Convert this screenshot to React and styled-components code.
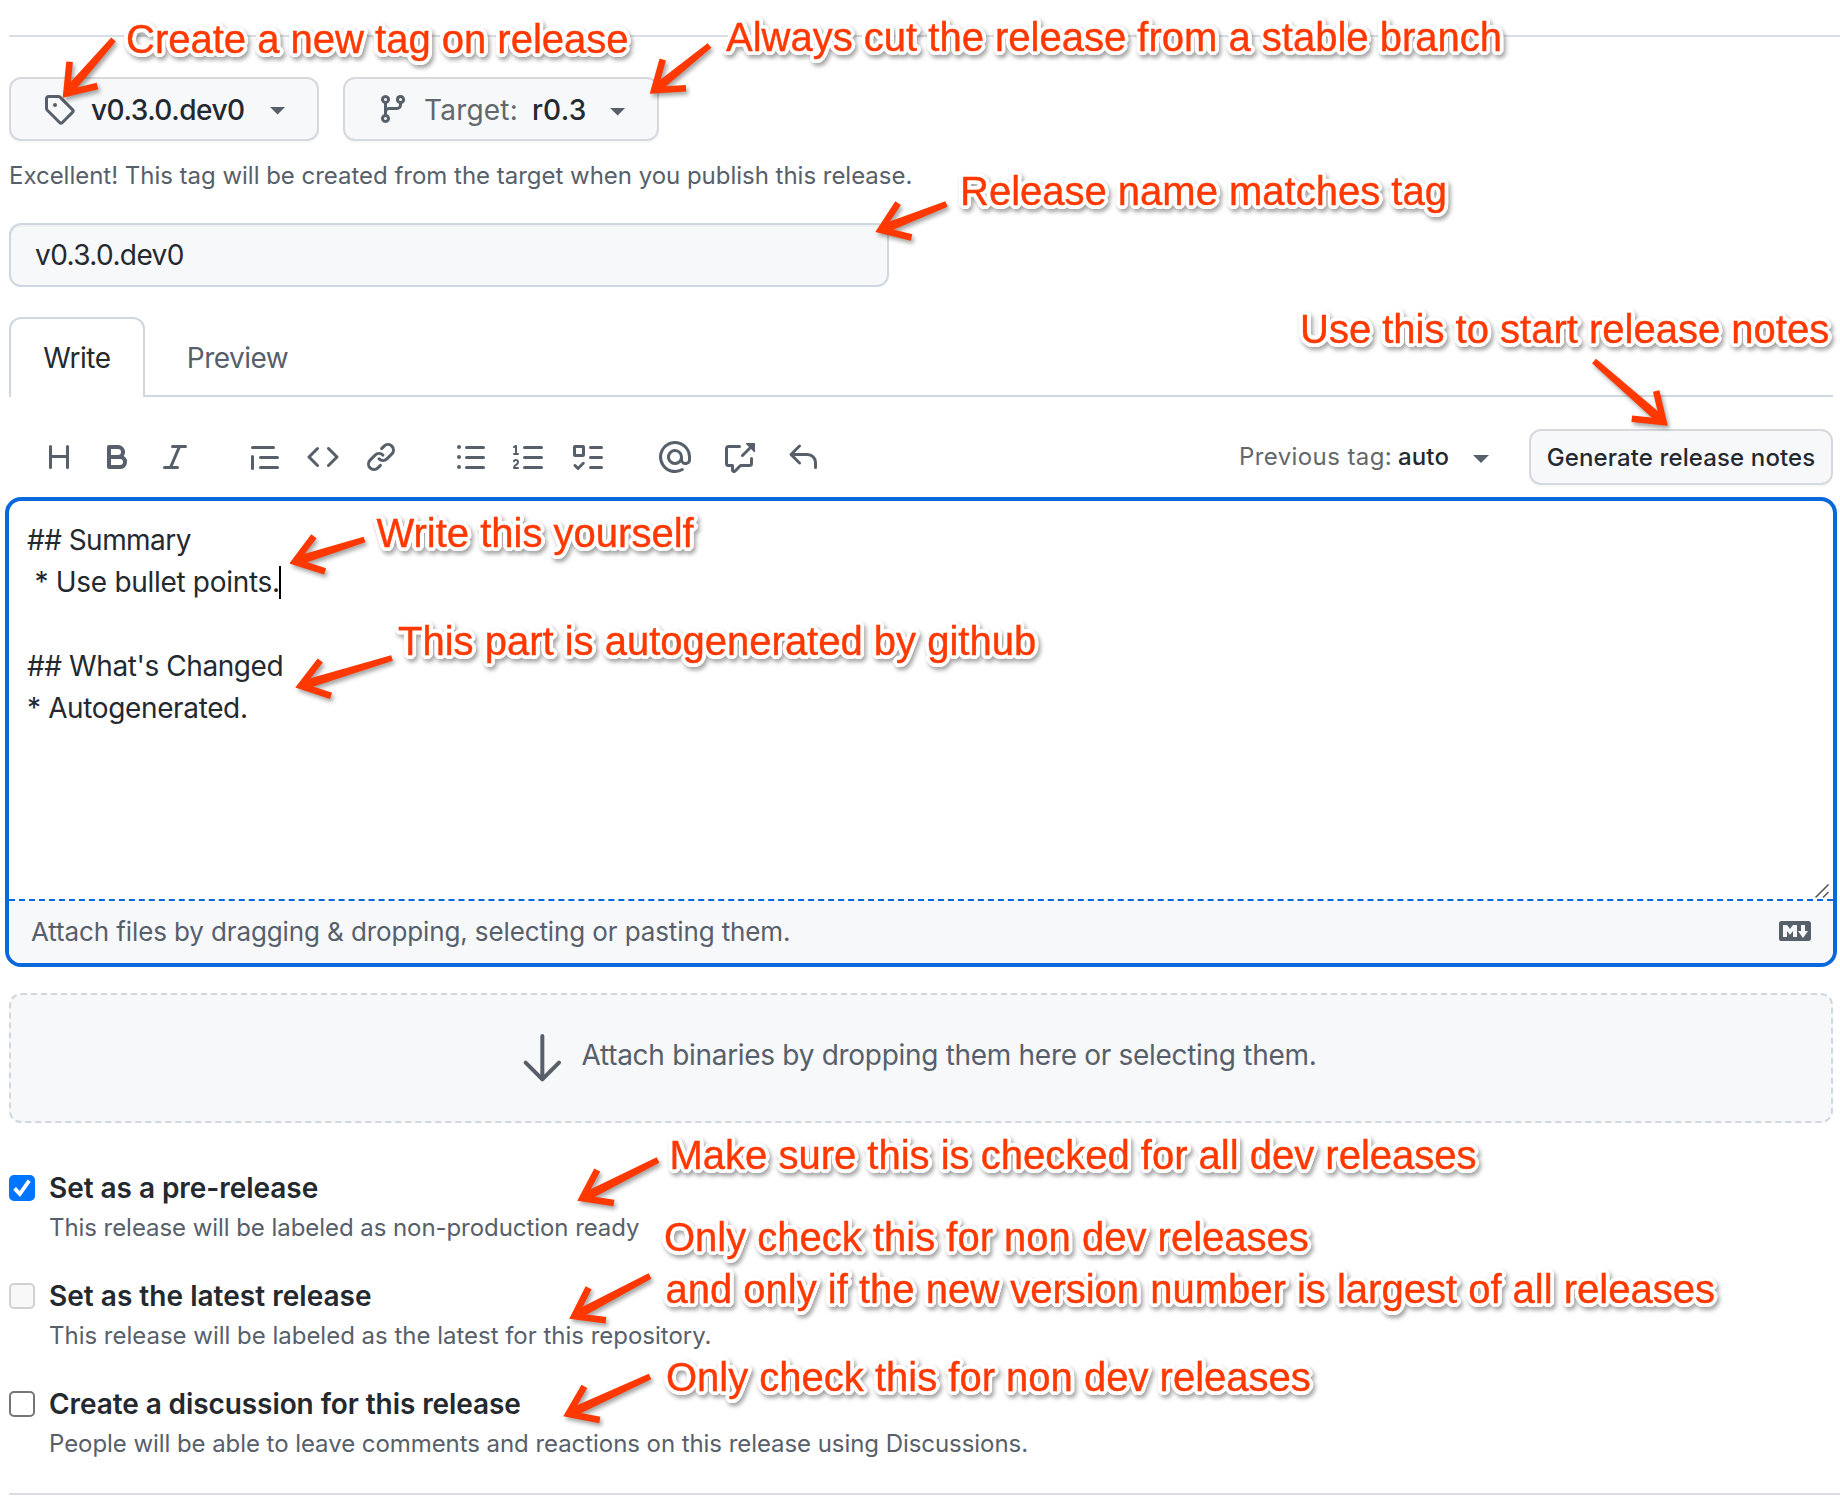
import React from "react";
import styled, { createGlobalStyle } from "styled-components";

const GlobalStyle = createGlobalStyle`
  * { box-sizing: border-box; }
  html, body { margin: 0; background: #fff; }
  body { overflow: hidden; }
`;

const color = {
  text: "#24292f",
  muted: "#57606a",
  neutral: "#62676c",
  border: "#d0d7de",
  divider: "#d8dee4",
  canvas: "#f6f8fa",
  accent: "#0969da",
  note: "#ff3800",
};

const Page = styled.main`
  position: relative;
  width: 1840px;
  height: 1502px;
  overflow: hidden;
  padding: 35px 7px 0 9px;
  color: ${color.text};
  font-family: Inter, "Liberation Sans", sans-serif;
  font-size: 28px;
`;

const Rule = styled.hr`
  height: 2px;
  margin: ${(p) => p.$top || 0}px -7px 0 0;
  border: 0;
  background: ${(p) => p.$color};
`;

const Txt = styled.span`
  white-space: pre;
  font-size: ${(p) => p.$size || 28}px;
  font-weight: ${(p) => p.$weight || 400};
  letter-spacing: ${(p) => p.$track || 0}px;
  color: ${(p) => p.$color || "inherit"};
`;

const PickerText = styled(Txt)`
  margin: 2px 0 0 ${(p) => p.$gap || 0}px;
`;

const Pickers = styled.div`
  display: flex;
  gap: 24px;
  margin-top: 40px;
`;

const Button = styled.button`
  display: flex;
  align-items: center;
  width: ${(p) => p.$width}px;
  height: ${(p) => p.$height || 64}px;
  padding: 0 0 0 ${(p) => p.$inset || 0}px;
  justify-content: ${(p) => (p.$inset ? "flex-start" : "center")};
  border: 2px solid #d5d9dd;
  border-radius: 12px;
  background: ${color.canvas};
  box-shadow: 0 2px 0 rgba(27, 31, 36, 0.03);
  color: ${color.text};
  font-family: inherit;
`;

const Caret = styled.span`
  width: 16px;
  height: 8px;
  flex: none;
  margin: ${(p) => p.$top || 0}px 0 0 ${(p) => p.$gap}px;
  background: ${color.muted};
  clip-path: polygon(0 0, 100% 0, 50% 100%);
`;

const Glyph = styled.svg`
  display: block;
  flex: none;
  width: ${(p) => p.$size || 32}px;
  height: ${(p) => p.$size || 32}px;
  margin-right: ${(p) => p.$gap || 0}px;
  fill: ${color.muted};
`;

const Hint = styled.p`
  display: flex;
  height: 36px;
  margin: 17px 0 29px;
  line-height: 36px;
  color: ${color.muted};
`;

const NameField = styled.div`
  display: flex;
  align-items: center;
  width: 880px;
  height: 64px;
  padding-left: 24px;
  border: 2px solid ${color.border};
  border-radius: 12px;
  background: ${color.canvas};
  box-shadow: inset 0 2px 0 rgba(208, 215, 222, 0.2);
`;

const Tabs = styled.nav`
  display: flex;
  height: 80px;
  margin-top: 30px;
  box-shadow: inset 0 -2px 0 ${color.border};
`;

const Tab = styled.a`
  display: flex;
  align-items: center;
  justify-content: center;
  width: ${(p) => p.$width}px;
  height: 80px;
  border: 2px solid ${(p) => (p.$active ? color.border : "transparent")};
  border-bottom: 0;
  border-radius: 12px 12px 0 0;
  background: ${(p) => (p.$active ? "#fff" : "transparent")};
  color: ${(p) => (p.$active ? color.text : color.muted)};
`;

const Toolbar = styled.div`
  display: flex;
  align-items: center;
  height: 56px;
  margin: 32px 0 12px;
  padding-left: 34px;
`;

const ToolGroup = styled.div`
  display: flex;
  gap: ${(p) => p.$gap || 26}px;
  margin-right: ${(p) => p.$after || 0}px;
`;

const PreviousTag = styled.div`
  display: flex;
  align-items: center;
  margin: 0 40px 2px auto;
`;

const AutoName = styled(Txt)`
  margin-left: 6px;
`;

const Editor = styled.section`
  height: 470px;
  margin: 0 -4px;
  display: flex;
  flex-direction: column;
  border: 4px solid ${color.accent};
  border-radius: 16px;
  overflow: hidden;
`;

const Draft = styled.div`
  position: relative;
  flex: 1;
  padding: 18px 18px 0;
`;

const Line = styled.div`
  display: flex;
  align-items: center;
  height: 42px;
  line-height: 42px;
`;

const Cursor = styled.span`
  width: 2px;
  height: 33px;
  margin-left: -1px;
  background: #000;
`;

const ResizeGrip = styled.svg`
  position: absolute;
  right: 3px;
  bottom: 0;
  width: 16px;
  height: 16px;
  fill: none;
  stroke: #5a5a5a;
  stroke-width: 1.6;
`;

const AttachBar = styled.footer`
  display: flex;
  align-items: center;
  justify-content: space-between;
  height: 64px;
  padding: 0 22px 2px;
  border-top: 2px dashed ${color.accent};
  background: ${color.canvas};
  color: ${color.muted};
`;

const DropZone = styled.section`
  display: flex;
  align-items: center;
  justify-content: center;
  height: 130px;
  margin: 26px 0 44px;
  padding-right: 15px;
  border: 2px dashed ${color.border};
  border-radius: 12px;
  background: ${color.canvas};
  color: ${color.muted};
`;

const DropText = styled.div`
  display: flex;
  padding-bottom: 6px;
`;

const Options = styled.div`
  display: flex;
  flex-direction: column;
  gap: 30px;
`;

const Option = styled.label`
  display: flex;
  gap: 14px;
  height: 78px;
`;

const boxLook = {
  checked: { edge: "#0075ff", fill: "#0075ff" },
  disabled: { edge: "#d1d1d1", fill: "#f8f8f8" },
  empty: { edge: "#767676", fill: "#fff" },
};

const Box = styled.span`
  flex: none;
  width: 26px;
  height: 26px;
  margin-top: 8px;
  border: 2px solid ${(p) => boxLook[p.$state].edge};
  border-radius: 5px;
  background: ${(p) => boxLook[p.$state].fill};
`;

const Check = styled.svg`
  display: block;
  width: 22px;
  height: 22px;
  fill: none;
  stroke: #fff;
  stroke-width: 3.8;
`;

const OptionText = styled.div`
  display: flex;
  flex-direction: column;
`;

const OptionTitle = styled(Txt)`
  line-height: 42px;
`;

const OptionNote = styled(Txt)`
  line-height: 38px;
  color: ${color.muted};
`;

const halo = Array.from({ length: 20 }, (_, i) => {
  const a = (i * Math.PI) / 10;
  return `${(4 * Math.cos(a)).toFixed(2)}px ${(4 * Math.sin(a)).toFixed(2)}px 0 #fff`;
}).join(", ");

const Callout = styled.span`
  position: absolute;
  left: ${(p) => p.$x}px;
  top: ${(p) => p.$y - 34}px;
  white-space: pre;
  font: 400 40px/40px "Liberation Sans", Arial, sans-serif;
  color: ${color.note};
  -webkit-text-stroke: 0.4px ${color.note};
  text-shadow: ${halo};
  filter: drop-shadow(2px 3px 2px rgba(0, 0, 0, 0.36));
`;

const ArrowLayer = styled.svg`
  position: absolute;
  inset: 0;
  width: 1840px;
  height: 1502px;
  pointer-events: none;
  filter: drop-shadow(2px 3px 2px rgba(0, 0, 0, 0.36));
`;

const paths = {
  tag: "M1 7.775V2.75C1 1.784 1.784 1 2.75 1h5.025c.464 0 .91.184 1.238.513l6.25 6.25a1.75 1.75 0 0 1 0 2.474l-5.026 5.026a1.75 1.75 0 0 1-2.474 0l-6.25-6.25A1.752 1.752 0 0 1 1 7.775Zm1.5 0c0 .066.026.13.073.177l6.25 6.25a.25.25 0 0 0 .354 0l5.025-5.025a.25.25 0 0 0 0-.354l-6.25-6.25a.25.25 0 0 0-.177-.073H2.75a.25.25 0 0 0-.25.25ZM6 5a1 1 0 1 1 0 2 1 1 0 0 1 0-2Z",
  branch: "M9.5 3.25a2.25 2.25 0 1 1 3 2.122V6A2.5 2.5 0 0 1 10 8.5H6a1 1 0 0 0-1 1v1.128a2.251 2.251 0 1 1-1.5 0V5.372a2.25 2.25 0 1 1 1.5 0v1.836A2.493 2.493 0 0 1 6 7h4a1 1 0 0 0 1-1v-.628A2.25 2.25 0 0 1 9.5 3.25Zm-6 0a.75.75 0 1 0 1.5 0 .75.75 0 0 0-1.5 0Zm8.25-.75a.75.75 0 1 0 0 1.5.75.75 0 0 0 0-1.5ZM4.25 12a.75.75 0 1 0 0 1.5.75.75 0 0 0 0-1.5Z",
  heading: "M3.75 2a.75.75 0 0 1 .75.75V7h7V2.75a.75.75 0 0 1 1.5 0v10.5a.75.75 0 0 1-1.5 0V8.5h-7v4.75a.75.75 0 0 1-1.5 0V2.75A.75.75 0 0 1 3.75 2Z",
  bold: "M4 2h4.5a3.501 3.501 0 0 1 2.852 5.53A3.499 3.499 0 0 1 9.5 14H4a1 1 0 0 1-1-1V3a1 1 0 0 1 1-1Zm1 7v3h4.5a1.5 1.5 0 0 0 0-3Zm3.5-2a1.5 1.5 0 0 0 0-3H5v3Z",
  italic: "M6 2.75A.75.75 0 0 1 6.75 2h6.5a.75.75 0 0 1 0 1.5h-2.505l-3.858 9H9.25a.75.75 0 0 1 0 1.5h-6.5a.75.75 0 0 1 0-1.5h2.505l3.858-9H6.75A.75.75 0 0 1 6 2.75Z",
  quote: "M1.75 2.5h10.5a.75.75 0 0 1 0 1.5H1.75a.75.75 0 0 1 0-1.5Zm4 5h8.5a.75.75 0 0 1 0 1.5h-8.5a.75.75 0 0 1 0-1.5Zm0 5h8.5a.75.75 0 0 1 0 1.5h-8.5a.75.75 0 0 1 0-1.5ZM2.5 7.75v6a.75.75 0 0 1-1.5 0v-6a.75.75 0 0 1 1.5 0Z",
  code: "m11.28 3.22 4.25 4.25a.75.75 0 0 1 0 1.06l-4.25 4.25a.749.749 0 0 1-1.275-.326.749.749 0 0 1 .215-.734L13.94 8l-3.72-3.72a.749.749 0 0 1 .326-1.275.749.749 0 0 1 .734.215Zm-6.56 0a.751.751 0 0 1 1.042.018.751.751 0 0 1 .018 1.042L2.06 8l3.72 3.72a.749.749 0 0 1-.326 1.275.749.749 0 0 1-.734-.215L.47 8.53a.75.75 0 0 1 0-1.06Z",
  link: "m7.775 3.275 1.25-1.25a3.5 3.5 0 1 1 4.95 4.95l-2.5 2.5a3.5 3.5 0 0 1-4.95 0 .751.751 0 0 1 .018-1.042.751.751 0 0 1 1.042-.018 1.998 1.998 0 0 0 2.83 0l2.5-2.5a2.002 2.002 0 0 0-2.83-2.83l-1.25 1.25a.751.751 0 0 1-1.042-.018.751.751 0 0 1-.018-1.042Zm-4.69 9.64a1.998 1.998 0 0 0 2.83 0l1.25-1.25a.751.751 0 0 1 1.042.018.751.751 0 0 1 .018 1.042l-1.25 1.25a3.5 3.5 0 1 1-4.95-4.95l2.5-2.5a3.5 3.5 0 0 1 4.95 0 .751.751 0 0 1-.018 1.042.751.751 0 0 1-1.042.018 1.998 1.998 0 0 0-2.83 0l-2.5 2.5a1.998 1.998 0 0 0 0 2.83Z",
  bullets: "M5.75 2.5h8.5a.75.75 0 0 1 0 1.5h-8.5a.75.75 0 0 1 0-1.5Zm0 5h8.5a.75.75 0 0 1 0 1.5h-8.5a.75.75 0 0 1 0-1.5Zm0 5h8.5a.75.75 0 0 1 0 1.5h-8.5a.75.75 0 0 1 0-1.5ZM2 14a1 1 0 1 1 0-2 1 1 0 0 1 0 2Zm1-6a1 1 0 1 1-2 0 1 1 0 0 1 2 0ZM2 4a1 1 0 1 1 0-2 1 1 0 0 1 0 2Z",
  numbers: "M5 3.25a.75.75 0 0 1 .75-.75h8.5a.75.75 0 0 1 0 1.5h-8.5A.75.75 0 0 1 5 3.25Zm0 5a.75.75 0 0 1 .75-.75h8.5a.75.75 0 0 1 0 1.5h-8.5A.75.75 0 0 1 5 8.25Zm0 5a.75.75 0 0 1 .75-.75h8.5a.75.75 0 0 1 0 1.5h-8.5a.75.75 0 0 1-.75-.75ZM.924 10.32a.5.5 0 0 1-.851-.525l.001-.001.001-.002.002-.004.007-.011c.097-.144.215-.273.348-.384.228-.19.588-.392 1.068-.392.468 0 .858.181 1.126.484.259.294.377.673.377 1.038 0 .987-.686 1.495-1.156 1.845l-.047.035c-.303.225-.522.4-.654.597h1.357a.5.5 0 0 1 0 1H.5a.5.5 0 0 1-.5-.5c0-1.005.692-1.52 1.167-1.875l.035-.025c.531-.396.8-.625.8-1.078a.57.57 0 0 0-.128-.376C1.806 10.068 1.695 10 1.5 10a.658.658 0 0 0-.429.163.835.835 0 0 0-.144.153ZM2.003 2.5V6h.503a.5.5 0 0 1 0 1H.5a.5.5 0 0 1 0-1h.503V3.308l-.28.14a.5.5 0 0 1-.446-.895l1.003-.5a.5.5 0 0 1 .723.447Z",
  tasks: "M2 2h4a1 1 0 0 1 1 1v4a1 1 0 0 1-1 1H2a1 1 0 0 1-1-1V3a1 1 0 0 1 1-1Zm4.655 8.595a.75.75 0 0 1 0 1.06L4.03 14.28a.75.75 0 0 1-1.06 0l-1.5-1.5a.749.749 0 0 1 .326-1.275.749.749 0 0 1 .734.215l.97.97 2.095-2.095a.75.75 0 0 1 1.06 0ZM9.75 2.5h5.5a.75.75 0 0 1 0 1.5h-5.5a.75.75 0 0 1 0-1.5Zm0 5h5.5a.75.75 0 0 1 0 1.5h-5.5a.75.75 0 0 1 0-1.5Zm0 5h5.5a.75.75 0 0 1 0 1.5h-5.5a.75.75 0 0 1 0-1.5Zm-7.25-9v3h3v-3Z",
  mention: "M4.75 2.37a6.501 6.501 0 0 0 6.5 11.26.75.75 0 0 1 .75 1.298A7.999 7.999 0 0 1 .989 4.148 8 8 0 0 1 16 7.75v1.5a2.75 2.75 0 0 1-5.072 1.475 3.999 3.999 0 0 1-6.65-4.19A4 4 0 0 1 12 8v1.25a1.25 1.25 0 0 0 2.5 0V7.867a6.5 6.5 0 0 0-9.75-5.496ZM10.5 8a2.5 2.5 0 1 0-5 0 2.5 2.5 0 0 0 5 0Z",
  crossRef: "M2.75 3.5a.25.25 0 0 0-.25.25v7.5c0 .138.112.25.25.25h2a.75.75 0 0 1 .75.75v2.19l2.72-2.72a.749.749 0 0 1 .53-.22h4.5a.25.25 0 0 0 .25-.25v-2.5a.75.75 0 0 1 1.5 0v2.5A1.75 1.75 0 0 1 13.25 13H9.06l-2.573 2.573A1.458 1.458 0 0 1 4 14.543V13H2.75A1.75 1.75 0 0 1 1 11.25v-7.5C1 2.784 1.784 2 2.75 2h5.5a.75.75 0 0 1 0 1.5ZM16 1.25v4.146a.25.25 0 0 1-.427.177L14.03 4.03l-3.75 3.75a.749.749 0 0 1-1.275-.326.749.749 0 0 1 .215-.734l3.75-3.75-1.543-1.543A.25.25 0 0 1 11.604 1h4.146a.25.25 0 0 1 .25.25Z",
  reply: "M6.78 1.97a.75.75 0 0 1 0 1.06L3.81 6h6.44A4.75 4.75 0 0 1 15 10.75v2.5a.75.75 0 0 1-1.5 0v-2.5a3.25 3.25 0 0 0-3.25-3.25H3.81l2.97 2.97a.749.749 0 0 1-.326 1.275.749.749 0 0 1-.734-.215L1.47 7.28a.75.75 0 0 1 0-1.06l4.25-4.25a.75.75 0 0 1 1.06 0Z",
  markdown: "M14.85 3c.63 0 1.15.52 1.14 1.15v7.7c0 .63-.51 1.15-1.15 1.15H1.15C.52 13 0 12.48 0 11.84V4.15C0 3.52.52 3 1.15 3ZM9 11V5H7L5.5 7 4 5H2v6h2V8l1.5 1.92L7 8v3Zm2.99.5L14.5 8H13V5h-2v3H9.5Z",
  down: "M4.97 13.22a.75.75 0 0 1 1.06 0L11 18.19V3.75a.75.75 0 0 1 1.5 0v14.44l4.97-4.97a.749.749 0 0 1 1.275.326.749.749 0 0 1-.215.734l-6.25 6.25a.75.75 0 0 1-1.06 0l-6.25-6.25a.75.75 0 0 1 0-1.06Z",
};

const Icon = ({ name, gap, size, grid = 16 }) => (
  <Glyph viewBox={`0 0 ${grid} ${grid}`} $gap={gap} $size={size}>
    <path d={paths[name]} />
  </Glyph>
);

const toolGroups = [
  { icons: ["heading", "bold", "italic"], after: 58 },
  { icons: ["quote", "code", "link"], after: 58 },
  { icons: ["bullets", "numbers", "tasks"], after: 56 },
  { icons: ["mention", "crossRef", "reply"], gap: 32 },
];

const draft = [
  { text: "## Summary", track: -0.546 },
  { text: " * Use bullet points.", track: -0.31, cursor: true },
  { text: "" },
  { text: "## What's Changed", track: -0.42 },
  { text: "* Autogenerated.", track: -0.37 },
];

const options = [
  {
    state: "checked",
    title: "Set as a pre-release",
    titleTrack: -0.047,
    note: "This release will be labeled as non-production ready",
    noteTrack: -0.06,
  },
  {
    state: "disabled",
    title: "Set as the latest release",
    titleTrack: 0.021,
    note: "This release will be labeled as the latest for this repository.",
    noteTrack: -0.014,
  },
  {
    state: "empty",
    title: "Create a discussion for this release",
    titleTrack: -0.086,
    note: "People will be able to leave comments and reactions on this release using Discussions.",
    noteTrack: -0.06,
  },
];

const callouts = [
  [126, 53, "Create a new tag on release"],
  [726, 51, "Always cut the release from a stable branch"],
  [960, 205, "Release name matches tag"],
  [1300, 343, "Use this to start release notes"],
  [376.5, 547, "Write this yourself"],
  [398, 655, "This part is autogenerated by github"],
  [669.5, 1169, "Make sure this is checked for all dev releases"],
  [664, 1251, "Only check this for non dev releases"],
  [665.5, 1303, "and only if the new version number is largest of all releases"],
  [666, 1391, "Only check this for non dev releases"],
];

const arrows = [
  [113.5, 39.5, 62.5, 98],
  [709.5, 45.5, 649.5, 94],
  [946.5, 204, 875, 232],
  [1594, 361, 1668, 426],
  [364.5, 539.5, 289, 563.5],
  [392, 658, 295, 687.5],
  [658, 1160, 577, 1201],
  [650, 1276, 569, 1319],
  [650, 1376.5, 563, 1416.5],
];

function Arrow({ from: [x1, y1], to: [x2, y2] }) {
  const length = Math.hypot(x2 - x1, y2 - y1);
  const turn = (Math.atan2(y2 - y1, x2 - x1) * 180) / Math.PI;
  const end = length - 6;
  return (
    <g transform={`translate(${x1} ${y1}) rotate(${turn})`}>
      <polygon points={`0,-3 ${end - 4},-4.6 ${end},0 ${end - 4},4.6 0,3`} fill={color.note} />
      <polyline
        points={`${end - 26},-18.5 ${end},0 ${end - 26},18.5`}
        fill="none"
        stroke={color.note}
        strokeWidth="6.6"
        strokeMiterlimit="8"
      />
    </g>
  );
}

export default function App() {
  return (
    <>
      <GlobalStyle />
      <Page>
        <Rule $color={color.divider} />

        <Pickers>
          <Button $width={310} $inset={32}>
            <Icon name="tag" gap={16} />
            <PickerText $weight={500} $track={-0.5}>v0.3.0.dev0</PickerText>
            <Caret $gap={25} $top={3} />
          </Button>
          <Button $width={316} $inset={32}>
            <Icon name="branch" gap={15} />
            <PickerText $track={0.2} $color={color.neutral}>Target:</PickerText>
            <PickerText $weight={500} $track={0.3} $gap={14}>r0.3</PickerText>
            <Caret $gap={23} $top={5} />
          </Button>
        </Pickers>

        <Hint>
          <Txt $size={24} $track={-0.02}>
            Excellent! This tag will be created from the target when you publish this release.
          </Txt>
        </Hint>

        <NameField>
          <Txt $track={-0.6}>v0.3.0.dev0</Txt>
        </NameField>

        <Tabs>
          <Tab $active $width={136}>
            <Txt $track={-0.45}>Write</Txt>
          </Tab>
          <Tab $width={185}>
            <Txt $track={-0.5}>Preview</Txt>
          </Tab>
        </Tabs>

        <Toolbar>
          {toolGroups.map((group) => (
            <ToolGroup key={group.icons[0]} $gap={group.gap} $after={group.after}>
              {group.icons.map((name) => (
                <Icon key={name} name={name} />
              ))}
            </ToolGroup>
          ))}
          <PreviousTag>
            <Txt $size={24} $track={0.4} $color={color.neutral}>Previous tag:</Txt>
            <AutoName $size={24} $weight={500} $track={0.1}>auto</AutoName>
            <Caret $gap={24} $top={6} />
          </PreviousTag>
          <Button $width={304} $height={56}>
            <Txt $size={24} $weight={500} $track={0.12}>Generate release notes</Txt>
          </Button>
        </Toolbar>

        <Editor>
          <Draft>
            {draft.map((line, i) => (
              <Line key={i}>
                <Txt $track={line.track}>{line.text}</Txt>
                {line.cursor && <Cursor />}
              </Line>
            ))}
            <ResizeGrip viewBox="0 0 16 16">
              <path d="M1.5 14.5 14.5 1.5M9 14.5l5.5-5.5" />
            </ResizeGrip>
          </Draft>
          <AttachBar>
            <Txt $size={26} $track={-0.115}>
              Attach files by dragging &amp; dropping, selecting or pasting them.
            </Txt>
            <Icon name="markdown" />
          </AttachBar>
        </Editor>

        <DropZone>
          <Icon name="down" grid={24} size={64} gap={7} />
          <DropText>
            <Txt $track={-0.3}>Attach binaries by dropping them here or selecting them.</Txt>
          </DropText>
        </DropZone>

        <Options>
          {options.map((o) => (
            <Option key={o.title}>
              <Box $state={o.state}>
                {o.state === "checked" && (
                  <Check viewBox="0 0 22 22">
                    <path d="M3.6 11.4 8.8 17 18.2 3.6" />
                  </Check>
                )}
              </Box>
              <OptionText>
                <OptionTitle $weight={600} $track={o.titleTrack}>{o.title}</OptionTitle>
                <OptionNote $size={24} $track={o.noteTrack}>{o.note}</OptionNote>
              </OptionText>
            </Option>
          ))}
        </Options>

        <Rule $color={color.divider} $top={32} />

        <ArrowLayer viewBox="0 0 1840 1502">
          {arrows.map(([x1, y1, x2, y2]) => (
            <Arrow key={`${x1}-${y1}`} from={[x1, y1]} to={[x2, y2]} />
          ))}
        </ArrowLayer>
        {callouts.map(([x, y, text]) => (
          <Callout key={y} $x={x} $y={y}>
            {text}
          </Callout>
        ))}
      </Page>
    </>
  );
}
